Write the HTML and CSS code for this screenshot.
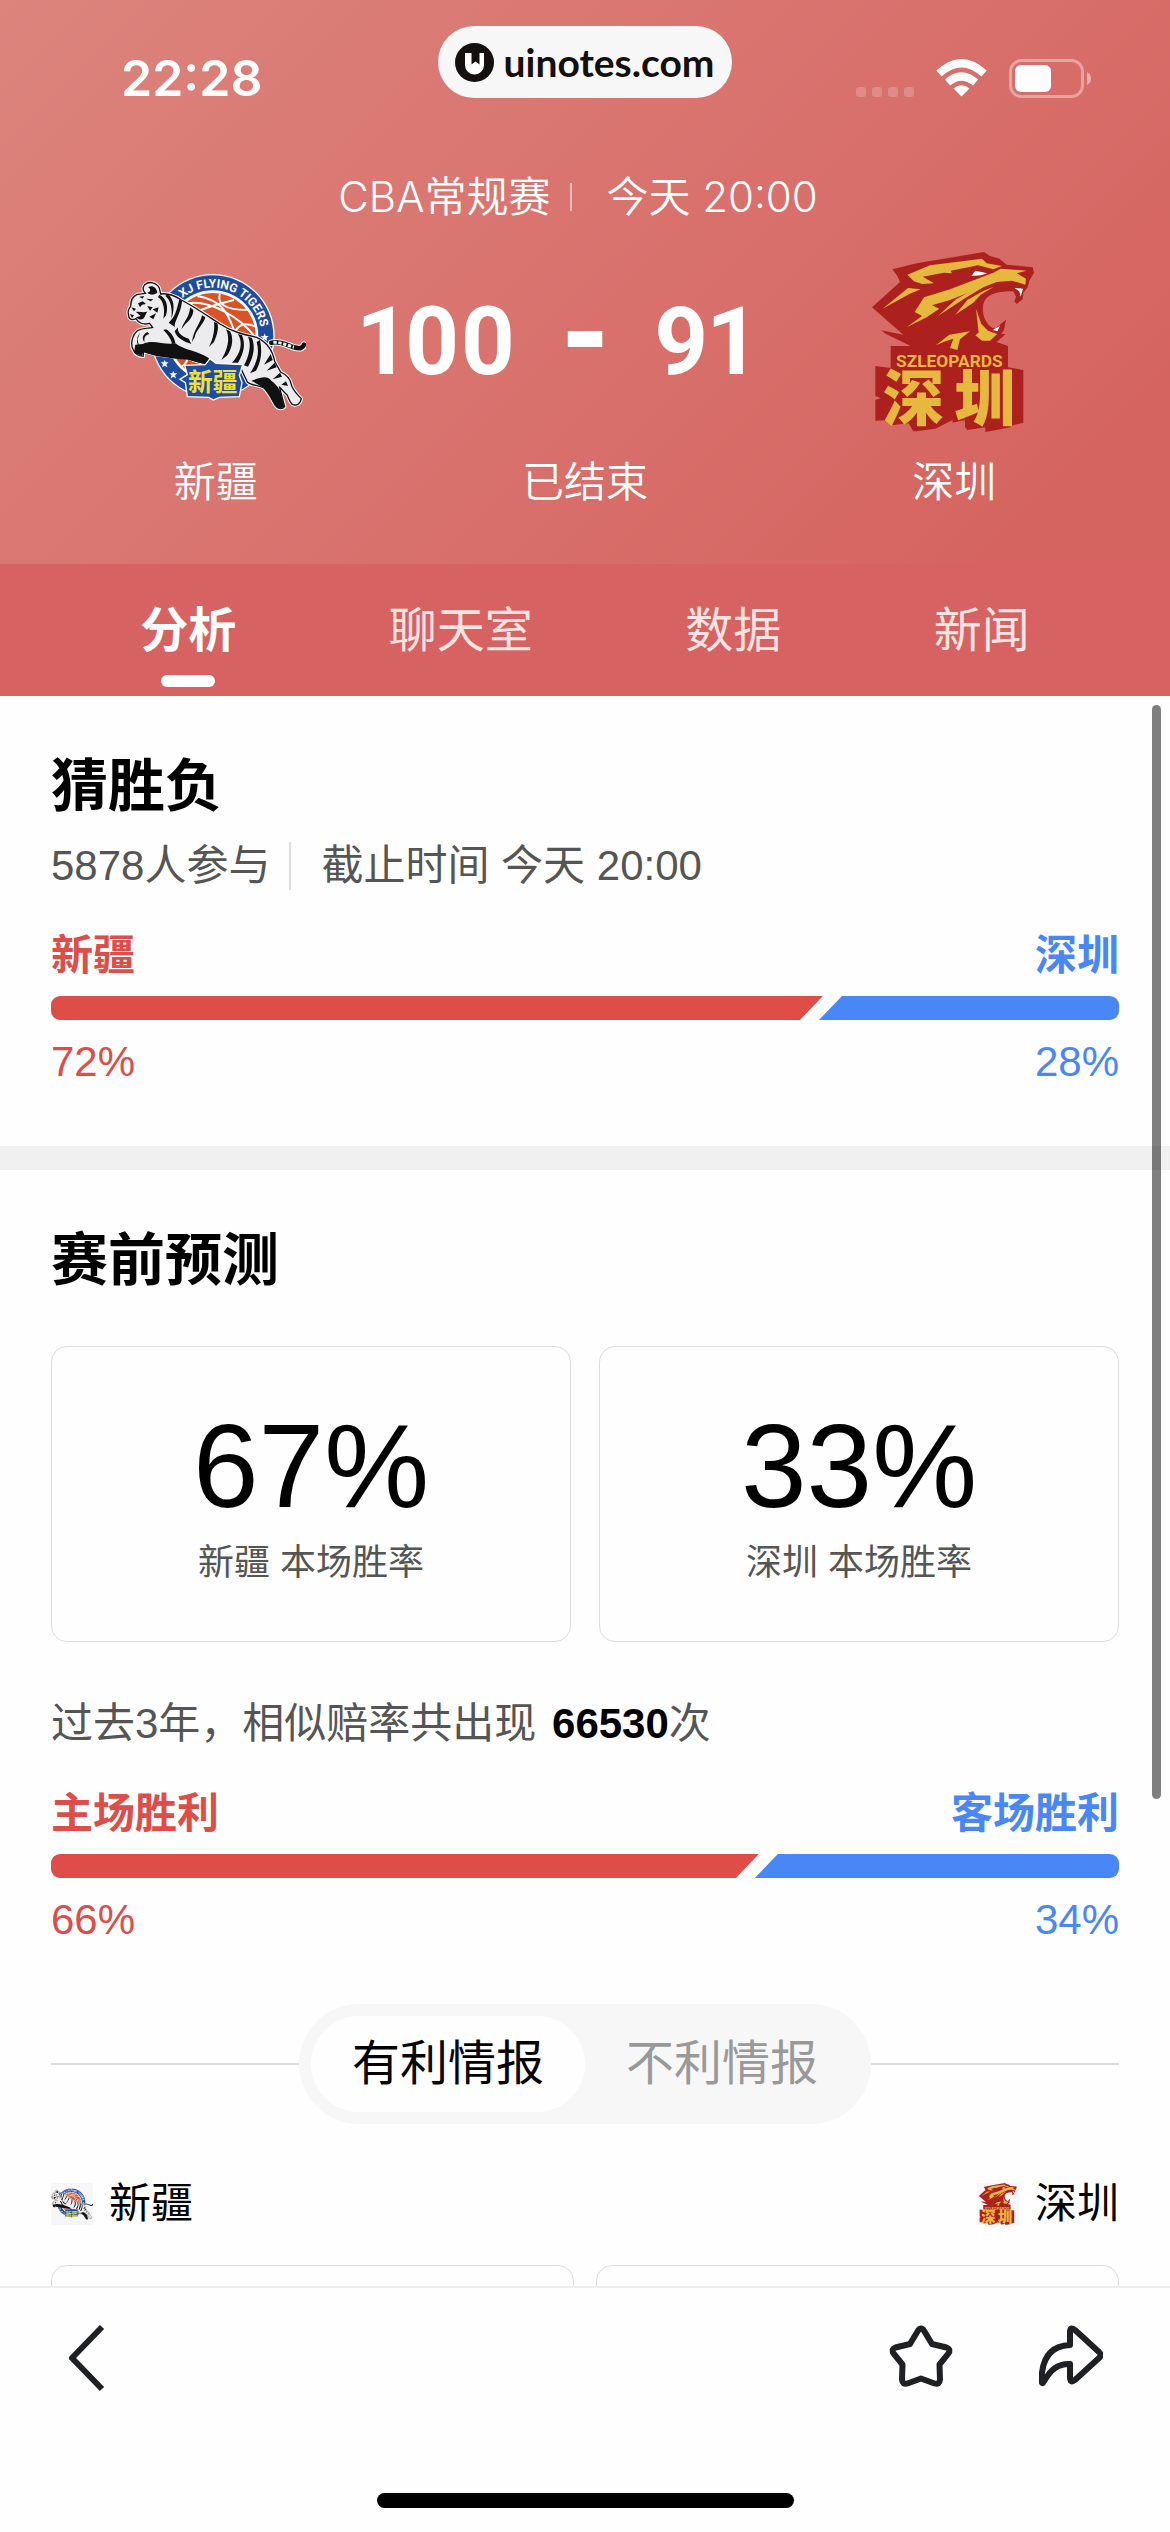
FILE: index.html
```html
<!DOCTYPE html>
<html lang="zh-CN">
<head>
<meta charset="utf-8">
<meta name="viewport" content="width=device-width, initial-scale=1">
<title>新疆 100 - 91 深圳</title>
<link rel="stylesheet" href="styles.css">
</head>
<body>
<svg class="defs" aria-hidden="true">
  <symbol id="logo-xj" viewBox="48 6 540 540">
    <circle cx="308" cy="258" r="186" fill="#fff"/>
    <circle cx="308" cy="258" r="182" fill="#1e4c9f"/>
    <circle cx="308" cy="258" r="137" fill="#fff"/>
    <circle cx="308" cy="258" r="129" fill="#dc5227"/>
    <g fill="none" stroke="#fff" stroke-width="6">
      <path d="M232 160C300 150 390 200 436 262M262 138C330 150 350 180 372 240M330 132C320 160 345 180 410 180M372 150C330 160 290 170 250 190M436 230C400 215 385 225 372 250M240 300C235 330 225 345 215 350"/>
    </g>
    <path id="xj-arc" d="M178 192A146 146 0 0 1 446 306" fill="none"/>
    <text class="logo-arc-text" fill="#fff"><textPath href="#xj-arc" startOffset="62">XJ FLYING TIGERS</textPath></text>
    <g fill="#fff">
      <path id="xj-star" d="M464 250l3 8 9 0-7 6 3 9-8-5-8 5 3-9-7-6 9 0z"/>
      <use href="#xj-star" x="-6" y="38"/><use href="#xj-star" x="-22" y="76"/><use href="#xj-star" x="-46" y="111"/>
      <use href="#xj-star" x="-300" y="79"/><use href="#xj-star" x="-274" y="112"/>
    </g>
    <path d="M484 278C510 272 530 285 552 292C572 298 580 292 582 284" fill="none" stroke="#fff" stroke-width="20" stroke-linecap="round"/>
    <path d="M484 278C510 272 530 285 552 292C572 298 580 292 582 284" fill="none" stroke="#111" stroke-width="14" stroke-linecap="round"/>
    <path d="M490 277C512 276 530 286 552 291" fill="none" stroke="#eee" stroke-width="9" stroke-dasharray="10 5"/>
    <path d="M104 104C118 92 140 98 148 114L152 132C176 128 196 138 214 150C250 168 290 196 330 222C366 246 404 254 440 262C470 276 488 300 494 334L512 366C528 374 540 384 543 400C546 420 562 432 574 446C572 460 562 468 548 464C540 458 536 446 532 436C520 424 512 416 508 410L524 470C516 480 502 476 496 466C486 450 478 430 462 414C446 404 424 408 412 396L390 350C360 346 330 348 300 344C270 336 250 334 232 322C190 322 140 316 100 304L100 318C88 320 74 312 70 300C60 284 66 256 82 242C100 232 116 236 128 232L118 220C100 226 84 218 78 206C64 214 54 204 56 194C50 182 58 176 62 168C62 150 68 140 80 134L106 130C98 122 98 112 104 104Z" fill="#fff" stroke="#fff" stroke-width="10"/>
    <path d="M104 104C118 92 140 98 148 114L152 132C176 128 196 138 214 150C250 168 290 196 330 222C366 246 404 254 440 262C470 276 488 300 494 334L512 366C528 374 540 384 543 400C546 420 562 432 574 446C572 460 562 468 548 464C540 458 536 446 532 436C520 424 512 416 508 410L524 470C516 480 502 476 496 466C486 450 478 430 462 414C446 404 424 408 412 396L390 350C360 346 330 348 300 344C270 336 250 334 232 322C190 322 140 316 100 304L100 318C88 320 74 312 70 300C60 284 66 256 82 242C100 232 116 236 128 232L118 220C100 226 84 218 78 206C64 214 54 204 56 194C50 182 58 176 62 168C62 150 68 140 80 134L106 130C98 122 98 112 104 104Z" fill="#ececee" stroke="#111" stroke-width="4"/>
    <g fill="#111">
      <path d="M98 282C130 266 160 286 196 280C220 300 262 302 296 324L300 344C260 340 240 326 214 328C170 324 120 316 100 306L96 318L72 308L76 284Z"/>
      <path d="M424 392C450 384 470 374 484 392C500 404 512 420 514 436L523 470C510 478 500 474 494 464C482 446 478 430 462 414Z"/>
      <path d="M114 112C126 104 140 112 142 128C132 136 118 134 112 128C122 126 124 118 114 112Z"/>
      <path d="M148 134C170 144 176 170 168 196L160 206C166 180 160 150 144 142ZM172 132C192 144 196 176 184 206C188 176 182 150 166 138ZM208 148C200 180 196 200 176 218L196 232C188 220 214 190 216 152ZM240 172C240 200 220 216 214 238L226 222C246 206 250 190 250 180ZM276 196C272 220 250 240 246 276L254 262C258 240 280 224 286 202ZM312 216C316 246 304 280 296 292L312 276C324 250 326 232 322 220ZM348 238C362 266 352 300 334 330L352 316C370 290 370 260 360 244ZM384 252C400 280 392 310 366 338L384 338C404 306 406 280 396 256ZM414 260C426 284 416 320 402 346L414 350C432 318 436 290 426 264Z"/>
      <path d="M440 276C450 310 440 340 420 370L438 362C456 330 456 300 450 270ZM482 312L462 344 488 330ZM494 338L470 362 500 352ZM510 368L488 388 516 380ZM528 394L514 404 534 408ZM160 240C176 256 184 270 186 282L196 280C194 262 182 246 168 238ZM204 232C200 250 220 262 236 266L244 282C226 276 200 266 194 244ZM90 250C78 262 78 280 88 290L82 268ZM112 246C98 252 94 268 104 276C100 262 108 254 118 252Z"/>
      <path d="M64 172L78 176 72 184ZM84 160L98 154 108 162 96 164 90 172ZM78 186C90 184 104 190 112 184L102 204C92 212 84 208 78 202L92 198ZM88 140L102 138 98 146ZM112 168L128 172 120 182ZM108 146L130 148 122 154ZM118 200L138 190 130 208ZM128 178L146 172 142 188ZM60 192L72 196 66 204Z"/>
    </g>
    <path d="M224 346L286 344 300 326 318 340 398 344 388 376 396 398 388 440 328 442 310 450 296 442 232 440 226 398 210 388 232 374Z" fill="#1e4c9f" stroke="#fff" stroke-width="4"/>
    <text class="logo-xj-text" x="308" y="424" text-anchor="middle" fill="#efe13c">新疆</text>
  </symbol>
  <symbol id="logo-sz" viewBox="42 36 540 540">
    <g fill="#ac201e">
      <path d="M127 88L200 70 402 36 420 48 448 56 470 74 548 82 552 98 538 122 533 142 520 158 518 178 500 192 493 184 498 170 490 154C450 152 408 160 400 192C396 214 400 244 424 262L436 266 468 239 462 270 454 282 467 282 440 306 474 318 474 382 520 390 520 548 482 558 482 562 406 576 406 562 352 570 345 560 345 540 308 548 308 540 256 566 200 574 190 574 176 550 124 556 122 540 76 542 76 480 92 474 76 468 76 378 122 384 122 318 182 318 108 282 94 271 160 284 66 202 150 126 142 108Z"/>
    </g>
    <g fill="#e6b83d">
      <path d="M172 104L240 76 396 56 410 70 456 78 430 88 384 76 302 92 306 100 282 98 218 110 252 130 216 132 192 124Z"/>
      <path d="M98 206L174 144 212 148 178 162Z"/>
      <path d="M170 262L216 228 194 216 222 172 300 148 430 98 452 86 530 92 500 100 528 116 526 134 486 122 440 126 400 142 366 154 300 180 246 196 268 206 230 232Z"/>
      <path d="M264 228L318 178 396 134 402 140 340 178ZM316 224L352 180 398 154 432 140 392 164 370 188ZM378 206L394 252 414 272 442 282 420 302 396 302 376 286 386 278Z"/>
      <path d="M258 316L298 284 360 274 330 298 322 330 300 324 310 296 286 304Z"/>
    </g>
    <path d="M364 108L376 92 412 100 394 106ZM494 144L519 146 512 170 508 154ZM428 270L450 258 442 274Z" fill="#fff"/>
    <text class="logo-sz-latin" x="298" y="380" text-anchor="middle" fill="#e6b83d">SZLEOPARDS</text>
    <text class="logo-sz-text" x="98 312" y="544" fill="#e6b83d">深圳</text>
  </symbol>
</svg>

<header class="hero">
  <div class="status">
    <span class="status-time">22:28</span>
    <span class="site-pill">
      <svg class="site-mark" viewBox="0 0 39 39" aria-hidden="true"><circle cx="19.500" cy="19.500" r="19.500" fill="#14100f"/><path d="M10 10h6.500v11.500l4-3 4 3V10H29v12a9.500 9.500 0 0 1-19 0z" fill="#fff"/></svg>
      <span>uinotes.com</span>
    </span>
    <span class="status-icons">
      <svg class="signal" viewBox="0 0 58 38" aria-hidden="true"><g fill="#fff" fill-opacity=".2"><rect x="0" y="28" width="10" height="10" rx="3"/><rect x="16" y="28" width="10" height="10" rx="3"/><rect x="32" y="28" width="10" height="10" rx="3"/><rect x="48" y="28" width="10" height="10" rx="3"/></g></svg>
      <svg class="wifi" viewBox="0 0 51 38" aria-hidden="true"><path d="M25.500 37.500L17.500 29.500Q25.500 23 33.500 29.500Z" fill="#fff"/><path d="M11.500 23.500Q25.500 11.500 39.500 23.500M3 14.500Q25.500-6 48 14.500" fill="none" stroke="#fff" stroke-width="8"/></svg>
      <svg class="battery" viewBox="0 0 82 39" aria-hidden="true"><rect x="1.500" y="1.500" width="72" height="36" rx="11" fill="none" stroke="#fff" stroke-opacity=".38" stroke-width="3"/><rect x="6" y="6" width="36" height="27" rx="6" fill="#fff"/><path d="M78 13q4 2 4 6.500t-4 6.500z" fill="#fff" fill-opacity=".45"/></svg>
    </span>
  </div>
  <div class="match-meta"><span>CBA常规赛</span><span class="rule"></span><span>今天 20:00</span></div>
  <div class="match">
    <svg class="team-logo" role="img" aria-label="新疆"><use href="#logo-xj"/></svg>
    <div class="score"><span class="home">100</span><span class="dash">-</span><span>91</span></div>
    <svg class="team-logo" role="img" aria-label="深圳"><use href="#logo-sz"/></svg>
    <span>新疆</span><span>已结束</span><span>深圳</span>
  </div>
</header>

<nav class="tabs">
  <a href="#analysis" class="tab active" aria-current="page">分析</a>
  <a href="#chat" class="tab">聊天室</a>
  <a href="#data" class="tab">数据</a>
  <a href="#news" class="tab">新闻</a>
</nav>

<div class="viewport">
  <span class="scroll-thumb"></span>
  <main class="content" id="analysis">
    <section class="panel guess">
      <h2>猜胜负</h2>
      <p class="guess-meta"><span>5878人参与</span><span class="rule"></span><span>截止时间 今天 20:00</span></p>
      <div class="compare">
        <div class="pair names"><span>新疆</span><span>深圳</span></div>
        <div class="bar"><span class="bar-home" style="width:72%"></span><span class="bar-away"></span></div>
        <div class="pair"><span>72%</span><span>28%</span></div>
      </div>
    </section>
    <section class="panel forecast">
      <h2>赛前预测</h2>
      <div class="odds">
        <div class="card"><strong>67%</strong><span>新疆 本场胜率</span></div>
        <div class="card"><strong>33%</strong><span>深圳 本场胜率</span></div>
      </div>
      <p class="history">过去3年，相似赔率共出现 <b>66530</b>次</p>
      <div class="compare">
        <div class="pair names"><span>主场胜利</span><span>客场胜利</span></div>
        <div class="bar"><span class="bar-home" style="width:66%"></span><span class="bar-away"></span></div>
        <div class="pair"><span>66%</span><span>34%</span></div>
      </div>
      <div class="switch">
        <div class="segments">
          <button type="button" class="segment selected" aria-pressed="true">有利情报</button>
          <button type="button" class="segment" aria-pressed="false">不利情报</button>
        </div>
      </div>
      <div class="intel-teams">
        <span class="intel-team"><svg class="mini-logo" aria-hidden="true"><use href="#logo-xj"/></svg>新疆</span>
        <span class="intel-team"><svg class="mini-logo" aria-hidden="true"><use href="#logo-sz"/></svg>深圳</span>
      </div>
      <div class="intel-cards"><div class="intel-card"></div><div class="intel-card"></div></div>
    </section>
  </main>
</div>

<footer class="toolbar">
  <div class="actions">
    <button type="button" class="icon-button back" aria-label="返回"><svg viewBox="0 0 64 68"><path d="M47 3L17 34L47 65"/></svg></button>
    <button type="button" class="icon-button" aria-label="收藏"><svg viewBox="0 0 64 68"><path d="M28.500 7.500Q32 1.500 35.500 7.500L43 20L57.500 23.500Q62.500 25.500 59 30L50.500 40.500L51 55.500Q50.500 61 45.500 59.500L32 54.500L18.500 59.500Q13.500 61 13 55.500L13.500 40.500L5 30Q1.500 25.500 6.500 23.500L21 20Z"/></svg></button>
    <button type="button" class="icon-button" aria-label="分享"><svg viewBox="0 0 64 68"><path d="M31 21V8Q31 2 36 6L60 28Q63 31 60 34L36 56Q31 60 31 53V40Q15 39 5.500 56.500Q2.500 62 2.500 56Q3 22 31 21Z"/></svg></button>
  </div>
  <span class="home-indicator"></span>
</footer>
</body>
</html>
```
FILE: styles.css
```css
* { box-sizing: border-box; }

body {
  display: flex;
  flex-direction: column;
  height: 100vh;
  margin: 0;
  background: #fefefe;
  color: #000;
  font: 42px/60px "Liberation Sans", "Noto Sans CJK SC", sans-serif;
}

h2, p { margin: 0; }
button { border: 0; padding: 0; background: none; color: inherit; font: inherit; }
.defs { position: absolute; width: 0; height: 0; }

.logo-arc-text { font: 700 36px Roboto, sans-serif; }
.logo-xj-text { font: 700 74px "Noto Sans CJK SC", sans-serif; }
.logo-sz-latin { font: 700 52px Roboto, sans-serif; }
.logo-sz-text { font: 900 184px "Noto Sans CJK SC", sans-serif; }

/* Match header */
.hero {
  padding-bottom: 51px;
  background: linear-gradient(135deg, #dc847d 0%, #d9746f 45%, #d56460 90%);
  color: #fff;
}
.status {
  display: grid;
  grid-template-columns: 1fr auto 1fr;
  align-items: end;
  height: 98px;
  padding: 0 79px 0 121px;
}
.status-time { font: 600 50px/40px Inter, sans-serif; }
.site-pill {
  display: flex;
  align-items: center;
  gap: 9px;
  height: 72px;
  margin-left: -42px;
  padding: 0 17px;
  border-radius: 36px;
  background: #f7f7f7;
  color: #14100f;
  font: 700 39px/72px Lato, sans-serif;
}
.site-mark { width: 39px; height: 39px; }
.status-icons { display: flex; justify-content: flex-end; gap: 22px; }
.signal { width: 58px; height: 38px; }
.wifi { width: 51px; height: 38px; }
.battery { width: 82px; height: 39px; }

.match-meta {
  display: flex;
  justify-content: center;
  align-items: center;
  padding: 69px 14px 0 0;
  font-family: Inter, "Noto Sans CJK SC", sans-serif;
  font-weight: 350;
}
.match-meta .rule { width: 2px; height: 28px; margin: 0 34px 0 20px; background: #fff; opacity: .5; }
.match {
  display: grid;
  grid-template-columns: repeat(3, minmax(0, 1fr));
  justify-items: center;
  align-items: center;
  row-gap: 21px;
  padding: 25px 31px 0;
  font-weight: 350;
}
.team-logo { width: 180px; height: 180px; }
.score {
  display: grid;
  grid-template-columns: minmax(0, 1fr) auto minmax(0, 1fr);
  width: 400px;
  height: 112px;
  column-gap: 46px;
  font: 700 94px/112px Roboto, sans-serif;
  font-variant-numeric: proportional-nums;
}
.score .home { justify-self: end; }
.score .dash { font: 700 112px/92px "DejaVu Sans", sans-serif; }

/* Tabs */
.tabs {
  display: flex;
  justify-content: space-around;
  padding: 2px 64px 0;
  background: #d66361;
}
.tab {
  position: relative;
  color: #fbe3e2;
  font-size: 48px;
  line-height: 130px;
  text-decoration: none;
}
.tab.active { color: #fff; font-weight: 700; }
.tab.active::after {
  content: "";
  position: absolute;
  bottom: 9px;
  left: 50%;
  width: 54px;
  height: 12px;
  margin-left: -27px;
  border-radius: 6px;
  background: #fff;
}

/* Scrolling content */
.viewport { position: relative; flex: 1; min-height: 0; }
.content { height: 100%; overflow-y: auto; scrollbar-width: none; }
.scroll-thumb {
  position: absolute;
  z-index: 1;
  top: 9px;
  right: 9px;
  width: 9px;
  height: 1094px;
  border-radius: 5px;
  background: rgba(0, 0, 0, .5);
}
.panel { padding: 50px 51px; }
.panel h2 { font-size: 57px; line-height: 80px; }
.guess { padding-bottom: 54px; border-bottom: 24px solid #f0f0f0; }
.guess-meta { display: flex; align-items: center; padding: 10px 0 30px; color: #555; }
.guess-meta .rule { width: 2px; height: 48px; margin: 0 30px 0 19px; background: #ddd; }

.pair { display: flex; justify-content: space-between; color: #df4d48; }
.pair span:last-child { color: #4a87f6; }
.names { font-weight: 700; }
.bar { display: flex; height: 24px; margin: 10px 0 12px; }
.bar-home {
  box-sizing: content-box;
  padding-right: 3px;
  border-radius: 9px 0 0 9px;
  background: #df4d48;
  clip-path: polygon(0 0, 100% 0, calc(100% - 23px) 100%, 0 100%);
}
.bar-away {
  flex: 1;
  margin-left: -4px;
  border-radius: 0 9px 9px 0;
  background: #4a87f6;
  clip-path: polygon(23px 0, 100% 0, 100% 100%, 0 100%);
}

.odds { display: grid; grid-template-columns: 1fr 1fr; gap: 28px; padding: 46px 0 52px; }
.card {
  display: flex;
  flex-direction: column;
  align-items: center;
  padding: 48px 0 52px;
  border: 1px solid #ddd;
  border-radius: 16px;
  color: #555;
  font-size: 36px;
  line-height: 52px;
}
.card strong { color: #000; font-size: 118px; font-weight: 400; line-height: 142px; }
.history { padding-bottom: 30px; color: #555; }
.history b { margin-left: 4px; color: #000; }

.switch { display: flex; align-items: center; padding: 54px 0 50px; }
.switch::before,
.switch::after { content: ""; flex: 1; height: 2px; background: #ddd; }
.segments { display: flex; padding: 12px; border-radius: 60px; background: #f7f7f7; }
.segment { padding: 0 41px; border-radius: 48px; color: #999; font-size: 48px; line-height: 96px; }
.segment.selected { background: #fefefe; color: #000; }

.intel-teams { display: flex; justify-content: space-between; padding-bottom: 31px; }
.intel-team { display: flex; align-items: center; gap: 16px; }
.mini-logo { width: 42px; height: 42px; background: #f7f7f7; }
.intel-cards { display: grid; grid-template-columns: 1fr 1fr; gap: 22px; }
.intel-card { min-height: 300px; border: 1px solid #ddd; border-radius: 16px; }

/* Bottom toolbar */
.toolbar {
  display: flex;
  flex-direction: column;
  align-items: center;
  gap: 101px;
  padding: 36px 0 24px;
  border-top: 2px solid #eee;
  background: #fefefe;
}
.actions { display: flex; gap: 86px; width: 100%; padding: 0 67px 0 55px; }
.icon-button { height: 68px; }
.icon-button svg {
  display: block;
  width: 64px;
  height: 68px;
  fill: none;
  stroke: #1f2023;
  stroke-width: 6;
  stroke-linejoin: round;
}
.back { margin-right: auto; }
.home-indicator { width: 417px; height: 15px; border-radius: 8px; background: #000; }
```
